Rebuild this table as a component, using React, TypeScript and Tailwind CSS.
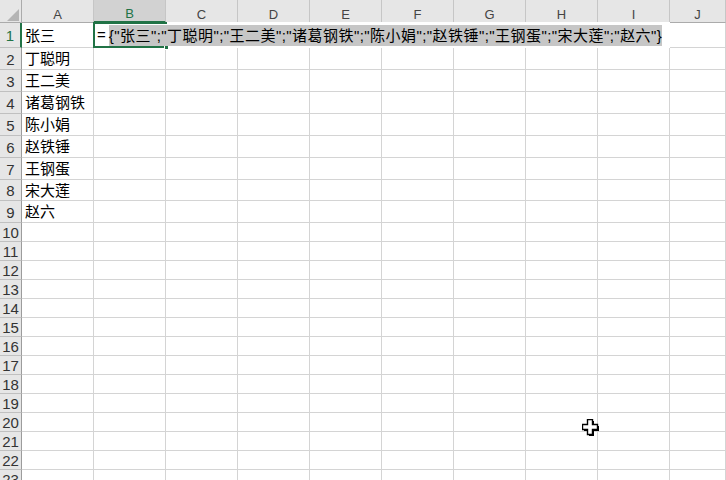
const cols = ["A", "B", "C", "D", "E", "F", "G", "H", "I", "J"];

const names = ["张三", "丁聪明", "王二美", "诸葛钢铁", "陈小娟", "赵铁锤", "王钢蛋", "宋大莲", "赵六"];

const formula = '{"张三";"丁聪明";"王二美";"诸葛钢铁";"陈小娟";"赵铁锤";"王钢蛋";"宋大莲";"赵六"}';

// heights include the bottom gridline
const rowHeights = [25, 22, 22, 22, 22, 22, 22, 21, 22, 19, 19, 19, 19, 19, 19, 19, 19, 19, 19, 19, 19, 19, 19];

const cjk = "font-['Liberation_Sans','Noto_Sans_CJK_SC',sans-serif]";

function ColHeader() {
  return (
    <div className="flex h-[23px] shrink-0">
      <div className="relative w-[22px] shrink-0 bg-[#e6e6e6] border-r border-b border-[#ababab]">
        <svg className="absolute left-[7px] top-[9px]" width="12" height="12" viewBox="0 0 12 12">
          <polygon points="12,0 12,12 0,12" fill="#b4b4b4" />
        </svg>
      </div>
      {cols.map((c) => {
        const sel = c === "B";
        return (
          <div
            key={c}
            className={`${c === "J" ? "flex-1 min-w-0" : "w-[72px] shrink-0"} flex items-center justify-center pt-[7px] text-[13px] border-r ${
              sel
                ? "bg-[#d2d2d2] text-[#217346] border-[#c6c6c6] border-b-2 border-b-[#217346]"
                : "bg-[#e6e6e6] text-[#444] border-[#c6c6c6] border-b border-b-[#ababab]"
            } font-['Liberation_Sans',sans-serif]`}
          >
            {c}
          </div>
        );
      })}
    </div>
  );
}

function Editor() {
  return (
    <div className="absolute left-[-1px] top-[-1px] z-10 h-[26px] w-[577px] bg-white">
      <div className="absolute left-0 top-0 h-[26px] w-[74px] border-l-2 border-t-2 border-b-2 border-[#217346]" />
      <div className="absolute left-[71px] top-[23px] h-[5px] w-[5px] bg-[#217346] border border-white" />
      <div className={`relative flex h-full items-center pl-[4px] pt-[1px] text-[15px] text-black whitespace-nowrap ${cjk}`}>
        <span className="pr-[3px]">=</span>
        <span className="bg-[#c6c6c6] leading-[21px] tracking-[0.45px]">{formula}</span>
      </div>
    </div>
  );
}

function Row({ n, h }: { n: number; h: number }) {
  const active = n === 1;
  return (
    <div className="flex shrink-0" style={{ height: h }}>
      <div
        className={`w-[22px] shrink-0 flex items-center justify-center pt-[3px] overflow-visible text-[15px] bg-[#e6e6e6] border-b border-b-[#c0c0c0] font-['Liberation_Sans',sans-serif] ${
          active
            ? "text-[#217346] border-r-2 border-r-[#217346] bg-[#d9d9d9]"
            : "text-[#333] border-r border-r-[#9c9c9c]"
        }`}
      >
        <span className="whitespace-nowrap">{n}</span>
      </div>
      {cols.map((c) => (
        <div
          key={c}
          className={`${c === "J" ? "flex-1 min-w-0" : "w-[72px] shrink-0"} relative flex items-center pl-[3px] pt-[2px] text-[15px] text-black border-r border-b border-[#d4d4d4] whitespace-nowrap ${cjk}`}
        >
          {c === "A" && n <= names.length ? names[n - 1] : null}
          {c === "B" && active ? <Editor /> : null}
        </div>
      ))}
    </div>
  );
}

function Cursor() {
  return (
    <svg className="absolute left-[582px] top-[419px] z-20" width="17" height="17" viewBox="0 0 17 17">
      <path d="M6 1h5v5h5v5h-5v5H6v-5H1V6h5z" fill="#000" transform="translate(1,1)" />
      <path d="M5.5 0.5h5v5h5v5h-5v5h-5v-5h-5v-5h5z" fill="#fff" stroke="#000" strokeWidth="1.4" />
    </svg>
  );
}

export default function App() {
  return (
    <div className="relative w-[726px] h-[480px] overflow-hidden bg-white flex flex-col select-none">
      <ColHeader />
      {rowHeights.map((h, i) => (
        <Row key={i} n={i + 1} h={h} />
      ))}
      <Cursor />
    </div>
  );
}
